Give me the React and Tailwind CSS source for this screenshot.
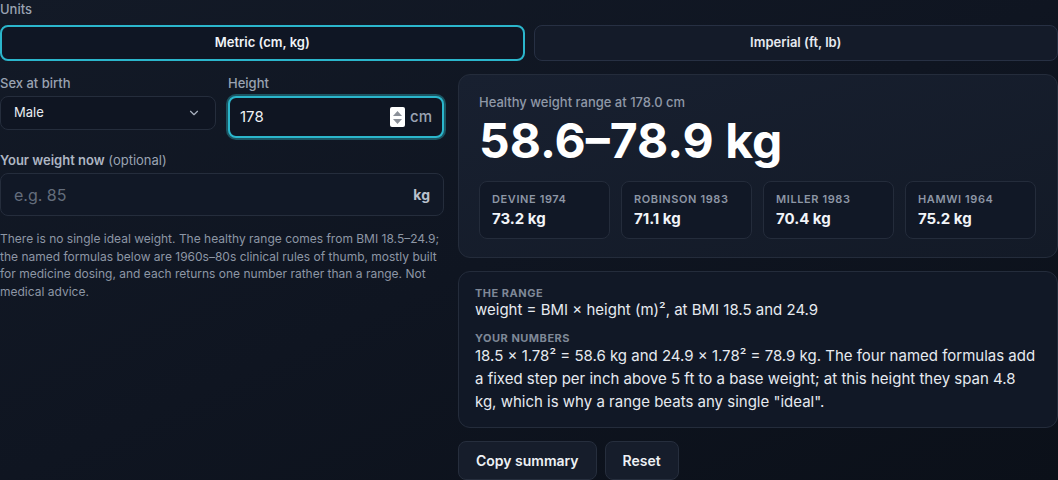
import { ChevronDown } from 'lucide-react';

const formulas = [
    { name: 'Devine 1974', value: '73.2 kg' },
    { name: 'Robinson 1983', value: '71.1 kg' },
    { name: 'Miller 1983', value: '70.4 kg' },
    { name: 'Hamwi 1964', value: '75.2 kg' },
];

const Spinner = () => (
    <div className="flex flex-col items-center justify-center gap-[3px] w-[15px] h-[20px] bg-white rounded-[2px]">
        <svg width="9" height="5" viewBox="0 0 9 5"><path d="M4.5 0L9 5H0z" fill="#8a8f98" /></svg>
        <svg width="9" height="5" viewBox="0 0 9 5"><path d="M0 0h9L4.5 5z" fill="#8a8f98" /></svg>
    </div>
);

export default function App() {
    return (
        <div className="min-h-screen w-[1058px] bg-gradient-to-br from-[#131a27] via-[#0f1521] to-[#0b1019] font-['Inter',sans-serif] text-[#e5e9f0] overflow-hidden">
            <p className="text-[13px] font-medium text-[#9aa3b2] leading-[18px]">Units</p>
            <div className="grid grid-cols-2 gap-[9px] mt-[7px]">
                <button className="h-[36px] rounded-lg border-2 border-[#2bb6cc] bg-[#0f1624] text-[13px] font-semibold text-[#f1f4f8]">
                    Metric (cm, kg)
                </button>
                <button className="h-[36px] rounded-lg border border-[#273043] bg-[#141b29] text-[13px] font-semibold text-[#e6eaf0]">
                    Imperial (ft, lb)
                </button>
            </div>

            <div className="grid grid-cols-[444px_1fr] gap-[14px] mt-[13px]">
                {/* left column */}
                <div>
                    <div className="grid grid-cols-2 gap-[12px]">
                        <div>
                            <p className="text-[13px] font-medium text-[#9aa3b2] leading-[16px] mt-[1px]">Sex at birth</p>
                            <div className="mt-[5px] h-[34px] rounded-lg border border-[#252d3c] bg-[#0f1522] flex items-center justify-between pl-[13px] pr-[14px]">
                                <span className="text-[13px] text-[#e8ecf2]">Male</span>
                                <ChevronDown className="w-[14px] h-[14px] text-[#aab2c0]" strokeWidth={2} />
                            </div>
                        </div>
                        <div>
                            <p className="text-[13px] font-medium text-[#9aa3b2] leading-[16px] mt-[1px]">Height</p>
                            <div className="mt-[5px] h-[42px] rounded-lg border-2 border-[#2bb6cc] ring-2 ring-[#1b5663] bg-[#0f1522] flex items-center pl-[10px] pr-[10px]">
                                <span className="text-[15px] text-[#eef1f5] flex-1">178</span>
                                <Spinner />
                                <span className="ml-[5px] text-[15px] font-medium text-[#9aa3b2]">cm</span>
                            </div>
                        </div>
                    </div>

                    <p className="mt-[14px] text-[13px] text-[#9aa3b2] leading-[16px]">
                        <span className="font-semibold text-[#aeb6c3]">Your weight now</span> (optional)
                    </p>
                    <div className="mt-[5px] h-[43px] rounded-lg border border-[#252d3c] bg-[#111826] flex items-center justify-between pl-[13px] pr-[13px]">
                        <span className="text-[16px] text-[#646d7c]">e.g. 85</span>
                        <span className="text-[14px] font-bold text-[#b8c0cc]">kg</span>
                    </div>

                    <p className="mt-[14px] text-[12px] leading-[17.5px] text-[#8d96a5]">
                        There is no single ideal weight. The healthy range comes from BMI 18.5–24.9; the named formulas below are 1960s–80s clinical rules of thumb, mostly built for medicine dosing, and each returns one number rather than a range. Not medical advice.
                    </p>
                </div>

                {/* right column */}
                <div>
                    <div className="rounded-xl border border-[#242c3b] bg-gradient-to-br from-[#182030] to-[#131a27] px-5 pt-[19px] pb-[18px]">
                        <p className="text-[13px] font-medium text-[#8f98a7] leading-[16px]">Healthy weight range at 178.0 cm</p>
                        <p className="mt-[2px] text-[48px] font-bold leading-[58px] text-white">58.6–78.9 kg</p>
                        <div className="mt-[11px] grid grid-cols-4 gap-[11px] pr-[1px]">
                            {formulas.map((f) => (
                                <div key={f.name} className="h-[58px] rounded-lg border border-[#242c3b] bg-[#111826] px-[12px] pt-[10px]">
                                    <p className="text-[11px] font-semibold uppercase tracking-[0.6px] text-[#8d96a5] leading-[14px]">{f.name}</p>
                                    <p className="mt-[3px] text-[15px] font-bold text-[#f2f4f8] leading-[19px]">{f.value}</p>
                                </div>
                            ))}
                        </div>
                    </div>

                    <div className="mt-[13px] rounded-xl border border-[#242c3b] bg-[#111826] px-4 pt-[14px] pb-[14px]">
                        <p className="text-[11px] font-bold uppercase tracking-[0.5px] text-[#7f8897] leading-[14px]">The range</p>
                        <p className="text-[15px] text-[#e6eaf0] leading-[20px]">weight = BMI × height (m)², at BMI 18.5 and 24.9</p>
                        <p className="mt-[12px] text-[11px] font-bold uppercase tracking-[0.5px] text-[#7f8897] leading-[12px]">Your numbers</p>
                        <p className="text-[15px] text-[#e6eaf0] leading-[23px]">
                            18.5 × 1.78² = 58.6 kg and 24.9 × 1.78² = 78.9 kg. The four named formulas add a fixed step per inch above 5 ft to a base weight; at this height they span 4.8 kg, which is why a range beats any single "ideal".
                        </p>
                    </div>

                    <div className="mt-[13px] flex gap-[8px]">
                        <button className="h-[39px] px-[17px] rounded-lg border border-[#262e3d] bg-[#161d2b] text-[14px] font-semibold text-[#eef1f5]">Copy summary</button>
                        <button className="h-[39px] px-[17px] rounded-lg border border-[#262e3d] bg-[#161d2b] text-[14px] font-semibold text-[#eef1f5]">Reset</button>
                    </div>
                </div>
            </div>
        </div>
    );
}
